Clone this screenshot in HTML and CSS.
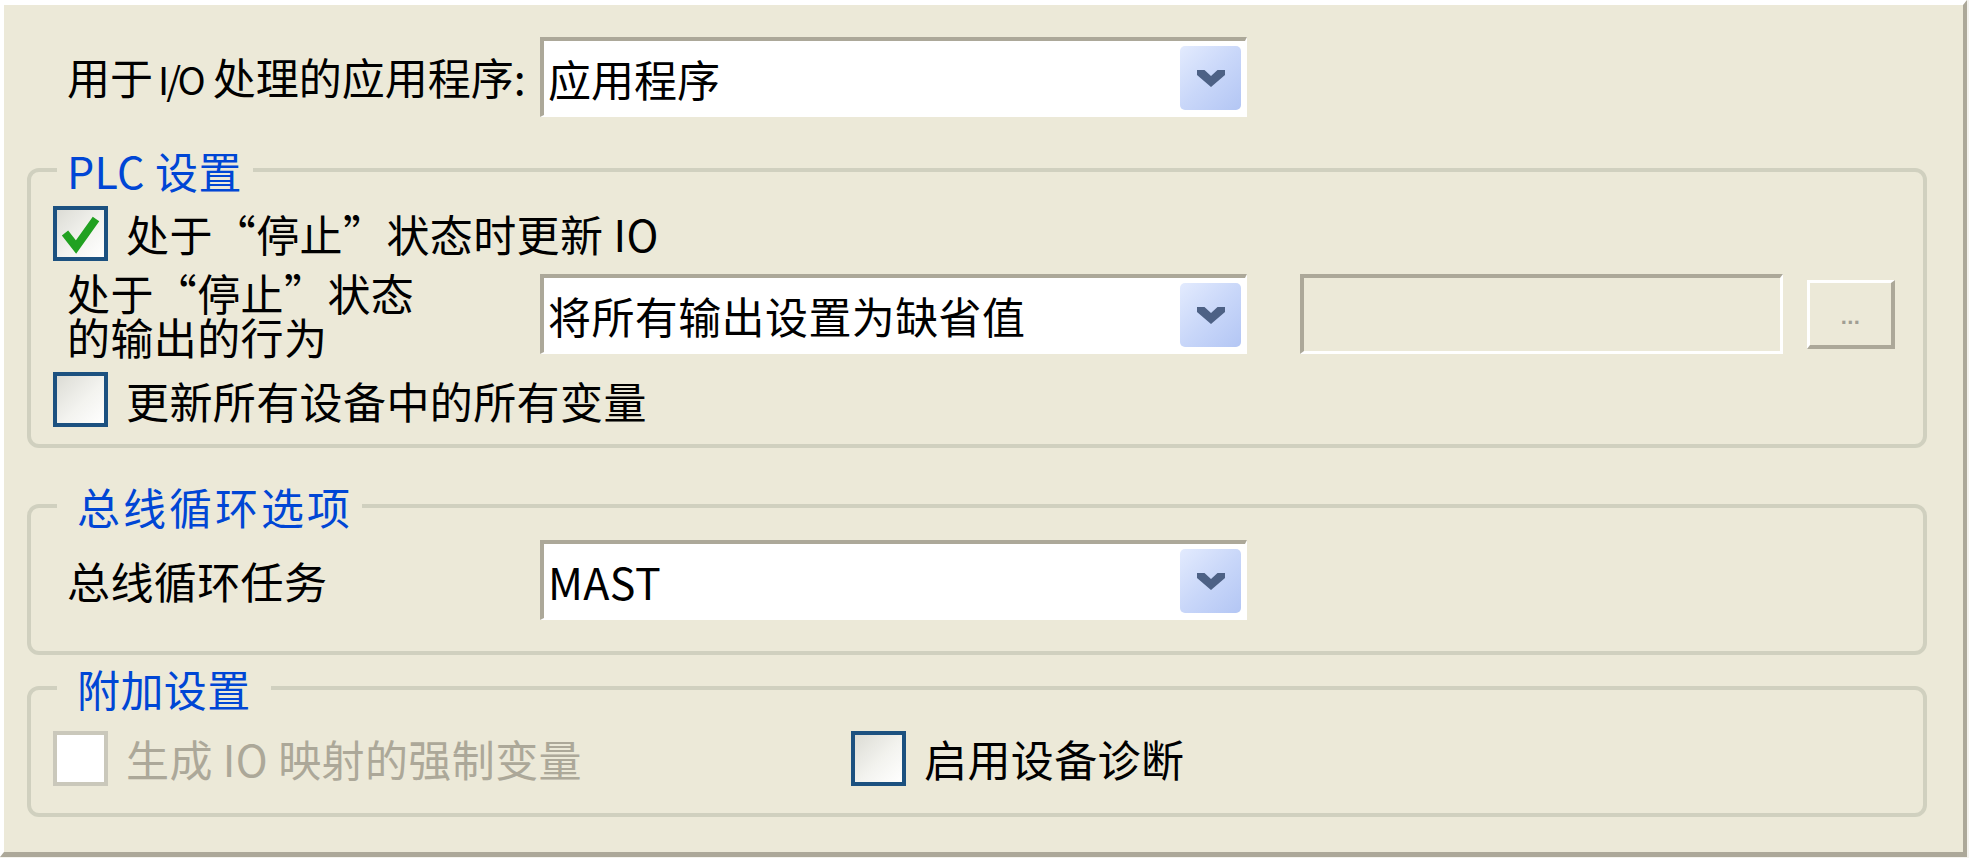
FILE: index.html
```html
<!DOCTYPE html>
<html lang="zh-CN">
<head>
    <meta charset="UTF-8">
    <title>I/O 设置</title>
    <link rel="stylesheet" href="styles.css">
</head>
<body>
    <div class="panel">
        <div class="row top-row">
            <span class="field-label">用于<span class="latin">I/O</span>处理的应用程序:</span>
            <div class="combo">
                <span class="combo-text">应用程序</span>
                <span class="drop-btn"><svg width="28" height="17" viewBox="0 0 28 17"><path d="M0 0H7.5L14 6L20.5 0H28V5L14 17L0 5Z" fill="#4d6185"/></svg></span>
            </div>
        </div>

        <fieldset class="group group-plc">
            <legend class="legend-plc">PLC 设置</legend>
            <label class="check-row row-a">
                <span class="checkbox"><svg width="47" height="47" viewBox="0 0 47 47"><polyline points="8,23 19,37 39,9" fill="none" stroke="#21a121" stroke-width="8"/></svg></span>
                <span>处于“停止”状态时更新 IO</span>
            </label>
            <div class="row row-b">
                <span class="field-label two-line">
                    <span class="line">处于“停止”状态</span>
                    <span class="line">的输出的行为</span>
                </span>
                <div class="combo">
                    <span class="combo-text">将所有输出设置为缺省值</span>
                    <span class="drop-btn"><svg width="28" height="17" viewBox="0 0 28 17"><path d="M0 0H7.5L14 6L20.5 0H28V5L14 17L0 5Z" fill="#4d6185"/></svg></span>
                </div>
                <div class="textfield"></div>
                <span class="dots-btn">...</span>
            </div>
            <label class="check-row row-c">
                <span class="checkbox"></span>
                <span>更新所有设备中的所有变量</span>
            </label>
        </fieldset>

        <fieldset class="group group-bus">
            <legend class="legend-bus">总线循环选项</legend>
            <div class="row bus-row">
                <span class="field-label">总线循环任务</span>
                <div class="combo">
                    <span class="combo-text">MAST</span>
                    <span class="drop-btn"><svg width="28" height="17" viewBox="0 0 28 17"><path d="M0 0H7.5L14 6L20.5 0H28V5L14 17L0 5Z" fill="#4d6185"/></svg></span>
                </div>
            </div>
        </fieldset>

        <fieldset class="group group-extra">
            <legend class="legend-extra">附加设置</legend>
            <div class="row extra-row">
                <label class="check-row wide disabled">
                    <span class="checkbox"></span>
                    <span>生成 IO 映射的强制变量</span>
                </label>
                <label class="check-row">
                    <span class="checkbox"></span>
                    <span>启用设备诊断</span>
                </label>
            </div>
        </fieldset>
    </div>
</body>
</html>
```

FILE: styles.css
```css
* {
    box-sizing: border-box;
}
body {
    margin: 0;
    background: #f4f3ee;
    font-family: "Noto Sans CJK SC", "Noto Sans", sans-serif;
    font-size: 43px;
    letter-spacing: 0.4px;
    color: #000;
}
.panel {
    width: 1967px;
    height: 857px;
    background: #ece9d8;
    border-style: solid;
    border-width: 5px 4px 5px 4px;
    border-color: #fff #aca899 #aca899 #fff;
    padding: 32px 36px 0 23px;
}
.row {
    display: flex;
    align-items: center;
}
.top-row {
    height: 80px;
    padding-left: 26px;
    letter-spacing: 0;
}
.field-label {
    width: 487px;
    padding-left: 14px;
    line-height: 44px;
    flex-shrink: 0;
    white-space: nowrap;
}
.latin {
    font-size: 38px;
    letter-spacing: -3px;
    margin: 0 10px 0 5px;
}
.two-line {
    display: flex;
    flex-direction: column;
}
.two-line .line {
    height: 44px;
}
.combo {
    width: 707px;
    height: 80px;
    flex-shrink: 0;
    background: #fff;
    border-style: solid;
    border-width: 4px 2px 2px 4px;
    border-color: #aca899 #fff #fff #aca899;
    padding: 0 4px 0 4px;
    display: flex;
    align-items: center;
    justify-content: space-between;
}
.combo-text {
    white-space: nowrap;
}
.drop-btn {
    width: 61px;
    height: 64px;
    border-radius: 5px;
    background: linear-gradient(135deg, #e3ebfe 0%, #c9d7f9 50%, #b3c6f4 100%);
    display: flex;
    align-items: center;
    justify-content: center;
}
.group {
    margin: 28px 0 0 0;
    min-width: 0;
    border: 4px solid #d0d0bf;
    border-radius: 12px;
    padding: 9px 22px 17px 22px;
}
legend {
    margin-left: 4px;
    color: #0046d5;
    line-height: 50px;
    white-space: nowrap;
}
.legend-plc {
    padding: 0 11px 0 10px;
}
.legend-bus {
    padding: 0 9px 0 20px;
    letter-spacing: 3px;
}
.legend-extra {
    padding: 0 20px 0 20px;
}
.check-row {
    display: flex;
    align-items: center;
    gap: 18px;
    height: 58px;
    white-space: nowrap;
}
.checkbox {
    width: 55px;
    height: 55px;
    flex-shrink: 0;
    border: 4px solid #1c5180;
    background: linear-gradient(135deg, #dcdcd5 0%, #f3f3ef 55%, #fff 100%);
}
.checkbox svg {
    display: block;
}
.row-b {
    margin-top: 12px;
    height: 80px;
}
.row-c {
    margin-top: 18px;
    height: 55px;
}
.textfield {
    width: 483px;
    height: 80px;
    margin-left: 53px;
    flex-shrink: 0;
    border-style: solid;
    border-width: 4px 3px 3px 4px;
    border-color: #aca899 #fff #fff #aca899;
    background: #ece9d8;
}
.dots-btn {
    width: 88px;
    height: 69px;
    margin-left: 24px;
    flex-shrink: 0;
    border-style: solid;
    border-width: 3px 4px 4px 3px;
    border-color: #fff #aca899 #aca899 #fff;
    display: flex;
    align-items: center;
    justify-content: center;
    padding-top: 6px;
    font-family: "Liberation Sans", sans-serif;
    font-size: 22px;
    font-weight: bold;
    color: #a09e94;
}
.group-bus {
    margin-top: 33px;
    padding-bottom: 31px;
}
.bus-row {
    height: 80px;
}
.group-extra {
    margin-top: 8px;
    padding-top: 16px;
    padding-bottom: 26px;
}
.extra-row {
    height: 58px;
}
.check-row.wide {
    width: 798px;
}
.disabled {
    color: #aca899;
}
.disabled .checkbox {
    border-color: #cac8bb;
    background: #fff;
}
```
